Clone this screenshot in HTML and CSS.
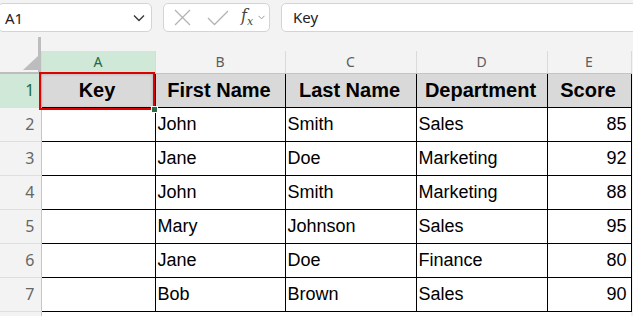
FILE: index.html
```html
<!DOCTYPE html>
<html lang="en">
<head>
<meta charset="UTF-8" />
<title>Sheet1</title>
<link rel="stylesheet" href="styles.css">
</head>
<body>

<div class="formula-bar">
  <div class="name-box">
    <span>A1</span>
    <svg width="12" height="8" viewBox="0 0 12 8"><path d="M1 1.5 L6 6.5 L11 1.5" fill="none" stroke="#333" stroke-width="1.3"/></svg>
  </div>
  <div class="fx-box">
    <svg width="17" height="17" viewBox="0 0 17 17"><path d="M1 1 L16 16 M16 1 L1 16" stroke="#b3b3b3" stroke-width="1.3" fill="none"/></svg>
    <svg width="22" height="16" viewBox="0 0 22 16"><path d="M1 8 L7.5 14.5 L21 1" stroke="#b3b3b3" stroke-width="1.3" fill="none"/></svg>
    <span class="fx"><i>f</i><sub>x</sub></span>
    <svg width="7" height="5" viewBox="0 0 7 5"><path d="M0.5 0.8 L3.5 3.8 L6.5 0.8" stroke="#9a9a9a" stroke-width="1" fill="none"/></svg>
  </div>
  <div class="formula-input">Key</div>
</div>

<div class="sheet">
  <table class="grid">
    <colgroup>
      <col class="w-rh"><col class="w-a"><col class="w-b"><col class="w-c"><col class="w-d"><col class="w-e">
    </colgroup>
    <thead>
      <tr class="col-row">
        <th class="corner"><svg width="15" height="14" viewBox="0 0 15 14"><polygon points="15,0 15,14 0,14" fill="#bdbdbd"/></svg></th>
        <th class="col active">A</th>
        <th class="col">B</th>
        <th class="col">C</th>
        <th class="col">D</th>
        <th class="col">E</th>
      </tr>
    </thead>
    <tbody id="rows">
      <tr>
        <th class="rh active">1</th>
        <td class="head">Key</td>
        <td class="head">First Name</td>
        <td class="head">Last Name</td>
        <td class="head">Department</td>
        <td class="head">Score</td>
      </tr>
    </tbody>
  </table>
  <div class="selection"><span class="handle"></span></div>
</div>

<script>
// rows 2-7 of the sheet
const people = [
  ["John", "Smith", "Sales", 85],
  ["Jane", "Doe", "Marketing", 92],
  ["John", "Smith", "Marketing", 88],
  ["Mary", "Johnson", "Sales", 95],
  ["Jane", "Doe", "Finance", 80],
  ["Bob", "Brown", "Sales", 90]
];

const tbody = document.getElementById('rows');
people.forEach((p, i) => {
  const tr = document.createElement('tr');
  tr.innerHTML = `
    <th class="rh">${i + 2}</th>
    <td></td>
    <td>${p[0]}</td>
    <td>${p[1]}</td>
    <td>${p[2]}</td>
    <td class="num">${p[3]}</td>
  `;
  tbody.appendChild(tr);
});

// empty row peeking at the bottom edge
const last = document.createElement('tr');
last.className = 'empty';
last.innerHTML = '<th class="rh"></th><td></td><td></td><td></td><td></td><td></td>';
tbody.appendChild(last);
</script>

</body>
</html>
```

FILE: styles.css
```css
body {
  margin: 0;
  background: #f3f3f3;
  font-family: "Noto Sans", sans-serif;
  overflow: hidden;
  width: 633px;
  height: 316px;
}
.formula-bar {
  display: flex;
  align-items: flex-start;
  height: 37px;
  padding-top: 3px;
  box-sizing: border-box;
}
.name-box {
  display: flex;
  align-items: center;
  justify-content: space-between;
  width: 154px;
  height: 29px;
  margin-left: -2px;
  padding: 0 6px 0 6px;
  box-sizing: border-box;
  background: #fff;
  border: 1px solid #d4d4d4;
  border-radius: 5px;
  font-size: 15px;
  color: #222;
}
.fx-box {
  display: flex;
  align-items: center;
  width: 107px;
  height: 29px;
  margin-left: 11px;
  padding-left: 10px;
  box-sizing: border-box;
  background: #fff;
  border: 1px solid #d4d4d4;
  border-radius: 5px;
}
.fx-box svg:nth-child(2) {
  margin-left: 16px;
}
.fx {
  margin-left: 12px;
  margin-right: 5px;
  font-family: "DejaVu Serif", serif;
  font-size: 16px;
  color: #444;
  line-height: 1;
}
.fx sub {
  font-size: 11px;
  font-style: italic;
}
.formula-input {
  flex: 1;
  height: 29px;
  margin-left: 11px;
  margin-right: -6px;
  padding-left: 11px;
  box-sizing: border-box;
  background: #fff;
  border: 1px solid #d4d4d4;
  border-radius: 5px;
  font-size: 15px;
  line-height: 27px;
  color: #222;
}
.sheet {
  position: relative;
  padding-top: 14px;
  background: linear-gradient(#bdbdbd, #bdbdbd) 38px 0 / 3px 100% no-repeat;
}
.grid {
  border-collapse: collapse;
  table-layout: fixed;
  width: 631px;
}
.w-rh { width: 41px; }
.w-a { width: 114px; }
.w-b { width: 130px; }
.w-c { width: 131px; }
.w-d { width: 131px; }
.w-e { width: 84px; }
.col-row {
  height: 22px;
}
.corner {
  padding: 0;
  background: transparent;
  border-bottom: 2px solid #bdbdbd;
  text-align: right;
  vertical-align: bottom;
  line-height: 0;
}
.corner svg {
  margin: 0 3px 2px 0;
}
.col {
  padding: 0;
  font-size: 14px;
  font-weight: normal;
  color: #5c5c5c;
  background: #f3f3f3;
  border-left: 1px solid #dadada;
  border-right: 1px solid #dadada;
  border-bottom: 1px solid #c4c4c4;
  line-height: 20px;
}
.col.active {
  background: #cfe8d7;
  color: #1d6b41;
}
.grid tbody tr {
  height: 34px;
}
.rh {
  padding: 0 6px 0 0;
  text-align: right;
  font-size: 16px;
  font-weight: normal;
  color: #666;
  background: #f3f3f3;
  border-bottom: 1px solid #dedede;
  border-right: 1px solid #c6c6c6;
}
.rh.active {
  background: #cfe8d7;
  color: #1d6b41;
}
.grid td {
  padding: 0 4px 0 2px;
  background: #fff;
  border: 1px solid #000;
  font-family: "Liberation Sans", Arial, sans-serif;
  font-size: 18px;
  color: #000;
  white-space: nowrap;
  overflow: hidden;
}
.grid td.head {
  background: #d9d9d9;
  font-size: 20px;
  font-weight: bold;
  text-align: center;
}
.grid td.num {
  text-align: right;
}
.grid tr.empty td {
  border-bottom: none;
  border-left: none;
  border-right: none;
}
.selection {
  position: absolute;
  left: 39px;
  top: 35px;
  width: 116px;
  height: 38px;
  box-sizing: border-box;
  border: 2px solid #e00000;
  box-shadow: inset 0 0 3px rgba(0, 0, 0, 0.25);
}
.handle {
  position: absolute;
  right: -5px;
  bottom: -5px;
  width: 5px;
  height: 5px;
  background: #2a6a45;
  border: 1px solid #fff;
}
```
